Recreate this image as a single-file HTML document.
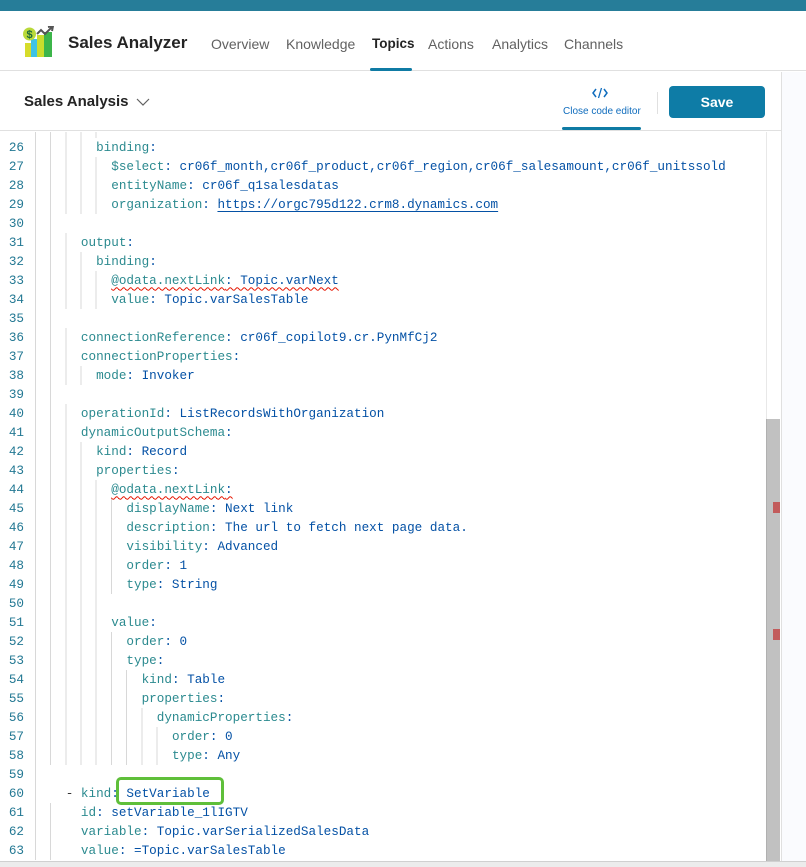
<!DOCTYPE html>
<html><head><meta charset="utf-8"><style>
*{margin:0;padding:0;box-sizing:border-box}
body{width:806px;height:867px;overflow:hidden;background:#fff;font-family:"Liberation Sans",sans-serif;position:relative}
.top{position:absolute;left:0;top:0;width:806px;height:11px;background:#267d99}
.hdr{position:absolute;left:0;top:11px;width:806px;height:60px;border-bottom:1px solid #e0e0e0;background:#fff}
.title{position:absolute;left:68px;top:22px;font-size:17px;font-weight:bold;color:#242424}
.nav{position:absolute;top:25px;font-size:14px;color:#616161}
.sub{position:absolute;left:0;top:72px;width:781px;height:59px;border-bottom:1px solid #e0e0e0;background:#fff}
.right{position:absolute;left:781px;top:72px;width:25px;height:795px;border-left:1px solid #e0e0e0;background:#fafbfe}
.code{position:absolute;left:0;top:132px;width:781px;height:729px;overflow:hidden;font-family:"Liberation Mono",monospace;font-size:12.65px}
.ln{position:absolute;left:0;height:19px;line-height:19px;width:781px;white-space:pre}
.n{position:absolute;left:0;width:24px;text-align:right;color:#237893}
.t{position:absolute;left:35.4px;color:#0451a5}
.g{position:absolute;left:35px;top:0;height:19px;background:repeating-linear-gradient(90deg,#d8d8d8 0,#d8d8d8 1px,transparent 1px,transparent 15.18px)}
.k{color:#2b8a8f}
.sq{text-decoration:underline wavy #e51400;text-decoration-thickness:1px;text-underline-offset:3px}
.u{text-decoration:underline;text-underline-offset:3px}
.sb{position:absolute;left:766px;top:419px;width:14px;height:442px;background:#c1c1c1;border-left:1px solid #b0b0b0}
.mk{position:absolute;left:773px;width:7px;height:11px;background:#c25b5b}
.foot{position:absolute;left:0;top:861px;width:806px;height:6px;background:#ececec;border-top:1px solid #d0d0d0}
</style></head><body>
<div class="top"></div>
<div class="hdr">
<svg style="position:absolute;left:22px;top:15px" width="34" height="32" viewBox="0 0 34 32">
<rect x="3" y="17" width="6" height="14" fill="#d6dc2a"/><rect x="9" y="13" width="6" height="18" fill="#3ec3e6"/><rect x="15" y="9" width="7" height="22" fill="#c9dd2c"/><rect x="22" y="6" width="8" height="25" fill="#3cb54a"/>
<circle cx="7.5" cy="8" r="6.5" fill="#b9d93a"/><text x="7.5" y="12" font-size="11" font-family="Liberation Sans" font-weight="bold" fill="#1d6b3a" text-anchor="middle">$</text>
<polyline points="15,8 19,4 23,8 30,1" fill="none" stroke="#555" stroke-width="2"/><polyline points="26,1 31,0 30,5" fill="none" stroke="#555" stroke-width="2"/>
</svg>
<div class="title">Sales Analyzer</div>
<div class="nav" style="left:211px">Overview</div>
<div class="nav" style="left:286px">Knowledge</div>
<div class="nav" style="left:372px;color:#242424;font-weight:bold;font-size:13.5px">Topics</div>
<div style="position:absolute;left:370px;top:57px;width:42px;height:3px;background:#0f7ba4;border-radius:2px"></div>
<div class="nav" style="left:428px">Actions</div>
<div class="nav" style="left:492px">Analytics</div>
<div class="nav" style="left:564px">Channels</div>
</div>
<div class="sub">
<div style="position:absolute;left:24px;top:21px;font-size:15px;font-weight:bold;color:#242424">Sales Analysis</div>
<svg style="position:absolute;left:136px;top:25px" width="14" height="10"><polyline points="1,2 7,8 13,2" fill="none" stroke="#616161" stroke-width="1.2"/></svg>
<svg style="position:absolute;left:592px;top:14px" width="16" height="14"><polyline points="4,3 1,7 4,11" fill="none" stroke="#0f6cbd" stroke-width="1.5"/><polyline points="12,3 15,7 12,11" fill="none" stroke="#0f6cbd" stroke-width="1.5"/><line x1="9.5" y1="2" x2="6.5" y2="12" stroke="#0f6cbd" stroke-width="1.3"/></svg>
<div style="position:absolute;left:563px;top:34px;font-size:10px;color:#0f6cbd">Close code editor</div>
<div style="position:absolute;left:562px;top:55px;width:79px;height:3px;background:#0f7ba4;border-radius:2px"></div>
<div style="position:absolute;left:657px;top:20px;width:1px;height:22px;background:#e0e0e0"></div>
<div style="position:absolute;left:669px;top:14px;width:96px;height:32px;background:#0e7ca6;border-radius:4px;color:#fff;font-weight:bold;font-size:14px;text-align:center;line-height:32px">Save</div>
</div>
<div class="right"></div>
<div class="code">
<div class="ln" style="top:-13.5px"><span class="g" style="width:73px"></span></div>
<div class="ln" style="top:5.5px"><span class="g" style="width:58px"></span><span class="n">26</span><span class="t">        <span class="k">binding</span>:</span></div>
<div class="ln" style="top:24.5px"><span class="g" style="width:73px"></span><span class="n">27</span><span class="t">          <span class="k">$select</span>: cr06f_month,cr06f_product,cr06f_region,cr06f_salesamount,cr06f_unitssold</span></div>
<div class="ln" style="top:43.5px"><span class="g" style="width:73px"></span><span class="n">28</span><span class="t">          <span class="k">entityName</span>: cr06f_q1salesdatas</span></div>
<div class="ln" style="top:62.5px"><span class="g" style="width:73px"></span><span class="n">29</span><span class="t">          <span class="k">organization</span>: <span class="u">https://orgc795d122.crm8.dynamics.com</span></span></div>
<div class="ln" style="top:81.5px"><span class="g" style="width:28px"></span><span class="n">30</span></div>
<div class="ln" style="top:100.5px"><span class="g" style="width:43px"></span><span class="n">31</span><span class="t">      <span class="k">output</span>:</span></div>
<div class="ln" style="top:119.5px"><span class="g" style="width:58px"></span><span class="n">32</span><span class="t">        <span class="k">binding</span>:</span></div>
<div class="ln" style="top:138.5px"><span class="g" style="width:73px"></span><span class="n">33</span><span class="t">          <span class="sq"><span class="k">@odata.nextLink</span>: Topic.varNext</span></span></div>
<div class="ln" style="top:157.5px"><span class="g" style="width:73px"></span><span class="n">34</span><span class="t">          <span class="k">value</span>: Topic.varSalesTable</span></div>
<div class="ln" style="top:176.5px"><span class="g" style="width:28px"></span><span class="n">35</span></div>
<div class="ln" style="top:195.5px"><span class="g" style="width:43px"></span><span class="n">36</span><span class="t">      <span class="k">connectionReference</span>: cr06f_copilot9.cr.PynMfCj2</span></div>
<div class="ln" style="top:214.5px"><span class="g" style="width:43px"></span><span class="n">37</span><span class="t">      <span class="k">connectionProperties</span>:</span></div>
<div class="ln" style="top:233.5px"><span class="g" style="width:58px"></span><span class="n">38</span><span class="t">        <span class="k">mode</span>: Invoker</span></div>
<div class="ln" style="top:252.5px"><span class="g" style="width:28px"></span><span class="n">39</span></div>
<div class="ln" style="top:271.5px"><span class="g" style="width:43px"></span><span class="n">40</span><span class="t">      <span class="k">operationId</span>: ListRecordsWithOrganization</span></div>
<div class="ln" style="top:290.5px"><span class="g" style="width:43px"></span><span class="n">41</span><span class="t">      <span class="k">dynamicOutputSchema</span>:</span></div>
<div class="ln" style="top:309.5px"><span class="g" style="width:58px"></span><span class="n">42</span><span class="t">        <span class="k">kind</span>: Record</span></div>
<div class="ln" style="top:328.5px"><span class="g" style="width:58px"></span><span class="n">43</span><span class="t">        <span class="k">properties</span>:</span></div>
<div class="ln" style="top:347.5px"><span class="g" style="width:73px"></span><span class="n">44</span><span class="t">          <span class="sq"><span class="k">@odata.nextLink</span>:</span></span></div>
<div class="ln" style="top:366.5px"><span class="g" style="width:88px"></span><span class="n">45</span><span class="t">            <span class="k">displayName</span>: Next link</span></div>
<div class="ln" style="top:385.5px"><span class="g" style="width:88px"></span><span class="n">46</span><span class="t">            <span class="k">description</span>: The url to fetch next page data.</span></div>
<div class="ln" style="top:404.5px"><span class="g" style="width:88px"></span><span class="n">47</span><span class="t">            <span class="k">visibility</span>: Advanced</span></div>
<div class="ln" style="top:423.5px"><span class="g" style="width:88px"></span><span class="n">48</span><span class="t">            <span class="k">order</span>: 1</span></div>
<div class="ln" style="top:442.5px"><span class="g" style="width:88px"></span><span class="n">49</span><span class="t">            <span class="k">type</span>: String</span></div>
<div class="ln" style="top:461.5px"><span class="g" style="width:73px"></span><span class="n">50</span></div>
<div class="ln" style="top:480.5px"><span class="g" style="width:73px"></span><span class="n">51</span><span class="t">          <span class="k">value</span>:</span></div>
<div class="ln" style="top:499.5px"><span class="g" style="width:88px"></span><span class="n">52</span><span class="t">            <span class="k">order</span>: 0</span></div>
<div class="ln" style="top:518.5px"><span class="g" style="width:88px"></span><span class="n">53</span><span class="t">            <span class="k">type</span>:</span></div>
<div class="ln" style="top:537.5px"><span class="g" style="width:103px"></span><span class="n">54</span><span class="t">              <span class="k">kind</span>: Table</span></div>
<div class="ln" style="top:556.5px"><span class="g" style="width:103px"></span><span class="n">55</span><span class="t">              <span class="k">properties</span>:</span></div>
<div class="ln" style="top:575.5px"><span class="g" style="width:118px"></span><span class="n">56</span><span class="t">                <span class="k">dynamicProperties</span>:</span></div>
<div class="ln" style="top:594.5px"><span class="g" style="width:133px"></span><span class="n">57</span><span class="t">                  <span class="k">order</span>: 0</span></div>
<div class="ln" style="top:613.5px"><span class="g" style="width:133px"></span><span class="n">58</span><span class="t">                  <span class="k">type</span>: Any</span></div>
<div class="ln" style="top:632.5px"><span class="g" style="width:13px"></span><span class="n">59</span></div>
<div class="ln" style="top:651.5px"><span class="g" style="width:13px"></span><span class="n">60</span><span class="t">    <span style="color:#333">- </span><span class="k">kind</span>: SetVariable</span></div>
<div class="ln" style="top:670.5px"><span class="g" style="width:28px"></span><span class="n">61</span><span class="t">      <span class="k">id</span>: setVariable_1lIGTV</span></div>
<div class="ln" style="top:689.5px"><span class="g" style="width:28px"></span><span class="n">62</span><span class="t">      <span class="k">variable</span>: Topic.varSerializedSalesData</span></div>
<div class="ln" style="top:708.5px"><span class="g" style="width:28px"></span><span class="n">63</span><span class="t">      <span class="k">value</span>: =Topic.varSalesTable</span></div>
<div style="position:absolute;left:766px;top:0;width:14px;height:287px;border-left:1px solid #e8e8e8"></div>
</div>
<div class="sb"></div>
<div class="mk" style="top:502px"></div>
<div class="mk" style="top:629px"></div>
<div style="position:absolute;left:116px;top:777px;width:108px;height:28px;border:3px solid #5fbf3a;border-radius:5px"></div>
<div class="foot"></div>
</body></html>
